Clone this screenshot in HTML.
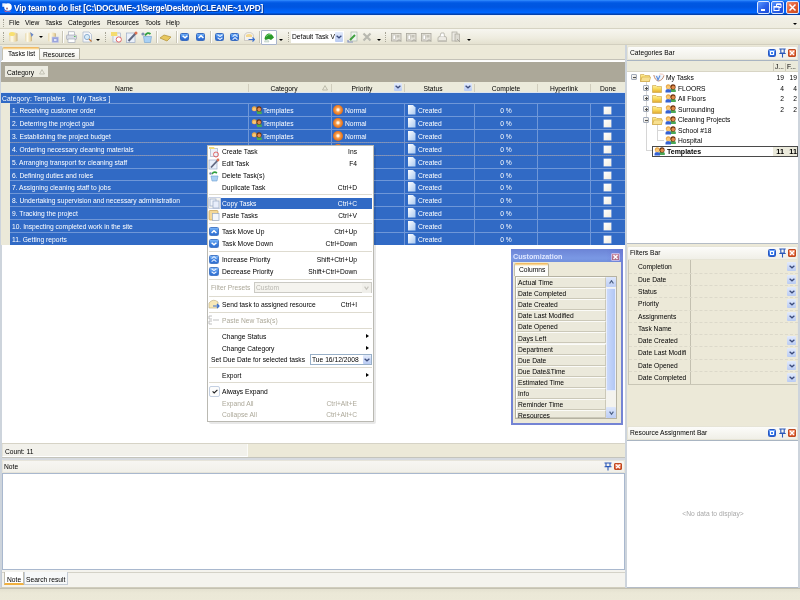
<!DOCTYPE html>
<html><head><meta charset="utf-8">
<style>
*{margin:0;padding:0;box-sizing:border-box}
html,body{width:800px;height:600px;overflow:hidden;background:#ece9d8;font-family:"Liberation Sans",sans-serif;font-size:6.7px;color:#000;position:relative}
.a{position:absolute}
.t{position:absolute;white-space:nowrap;line-height:8px;will-change:transform}
</style></head><body>

<div class="a" style="left:0px;top:0px;width:800px;height:15px;background:linear-gradient(#3a96ff 0,#1a70f4 1px,#0058e2 3px,#0055e0 7px,#0062f6 11px,#0066ff 12.5px,#0048c0 14px,#0a3a98 15px)"></div>
<svg class="a" style="left:2px;top:3px" width="10" height="9"><rect x="0.3" y="0.3" width="3.5" height="3.5" fill="#e8f0ff"/><circle cx="6" cy="4" r="3.8" fill="#fff"/><path d="M2 6.5 Q5 10 9.5 7.5 L8 9 H3 Z" fill="#d06080"/><circle cx="5" cy="5.5" r="1" fill="#a07080"/></svg>
<div class="t" style="left:14px;top:4px;color:#fff;font-weight:bold;font-size:8.3px;letter-spacing:-0.22px;line-height:10px;top:3px;text-shadow:1px 1px 0 #0a3a9a">Vip team to do list [C:\DOCUME~1\Serge\Desktop\CLEANE~1.VPD]</div>
<div class="a" style="left:757px;top:1px;width:13px;height:13px;border:1px solid #dce8ff;border-radius:2px;background:linear-gradient(135deg,#5a98ff,#2a5ee8 55%,#1c4cd8)"></div>
<div class="a" style="left:761px;top:9px;width:4px;height:2px;background:#fff"></div>
<div class="a" style="left:771px;top:1px;width:13px;height:13px;border:1px solid #dce8ff;border-radius:2px;background:linear-gradient(135deg,#5a98ff,#2a5ee8 55%,#1c4cd8)"></div>
<svg class="a" style="left:773px;top:3px" width="9" height="9"><path d="M3.5 3 V1 H8 V4.5 H6" stroke="#fff" stroke-width="1" fill="none"/><rect x="1" y="3.5" width="5" height="4" stroke="#fff" stroke-width="1" fill="none"/><path d="M1 4 H6" stroke="#fff" stroke-width="1.3"/><path d="M3.5 1.3 H8" stroke="#fff" stroke-width="1.3"/></svg>
<div class="a" style="left:786px;top:1px;width:13px;height:13px;border:1px solid #dce8ff;border-radius:2px;background:linear-gradient(135deg,#f09070,#e05a30 55%,#c84a20)"></div>
<svg class="a" style="left:788px;top:3px" width="9" height="9"><path d="M1.5 1.5 L7.5 7.5 M7.5 1.5 L1.5 7.5" stroke="#fff" stroke-width="1.5"/></svg>
<div class="a" style="left:0px;top:15px;width:800px;height:14px;background:linear-gradient(#e8eefc 0,#f4f3ee 1.5px,#f1efe6 3px,#eeecdf 100%);border-bottom:1px solid #d6d3c3"></div>
<div class="a" style="left:3px;top:19px;width:1px;height:8px;border-left:1px dotted #a8a698"></div>
<div class="t" style="left:9px;top:19px;">File</div>
<div class="t" style="left:25px;top:19px;">View</div>
<div class="t" style="left:45px;top:19px;">Tasks</div>
<div class="t" style="left:68px;top:19px;">Categories</div>
<div class="t" style="left:107px;top:19px;">Resources</div>
<div class="t" style="left:145px;top:19px;">Tools</div>
<div class="t" style="left:166px;top:19px;">Help</div>
<div class="a" style="left:793px;top:23px;border-left:2px solid transparent;border-right:2px solid transparent;border-top:2px solid #000"></div>
<div class="a" style="left:0px;top:29px;width:800px;height:16px;background:linear-gradient(#f7f6f0,#eeecdf 60%,#e4e1d0);border-bottom:1px solid #d2cfbf"></div>
<div class="a" style="left:3px;top:32px;width:1px;height:10px;border-left:1px dotted #a8a698"></div>
<svg width="0" height="0" style="position:absolute"><defs><linearGradient id="cyl" x1="0" y1="0" x2="1" y2="0"><stop offset="0" stop-color="#e6d8b0"/><stop offset="0.35" stop-color="#fffbea"/><stop offset="0.8" stop-color="#e8d4a0"/><stop offset="1" stop-color="#c8b080"/></linearGradient></defs></svg>
<svg class="a" style="left:8px;top:31px" width="11" height="12"><path d="M1 2.5 Q5 0 9.5 2.5 V10 Q5 12 1 10 Z" fill="url(#cyl)"/><ellipse cx="4" cy="3" rx="3" ry="2" fill="#f8e070"/></svg>
<svg class="a" style="left:24px;top:31px" width="11" height="12"><path d="M1 2.5 Q4.5 0.5 8 2.5 V10 Q4.5 12 1 10 Z" fill="url(#cyl)"/><path d="M6 1 L9.5 3.5 L7.5 6 Z" fill="#6a88c8"/></svg>
<div class="a" style="left:39px;top:36px;border-left:2px solid transparent;border-right:2px solid transparent;border-top:2px solid #000"></div>
<svg class="a" style="left:47px;top:31px" width="12" height="12"><path d="M1 2.5 Q5 0.5 9 2.5 V10 Q5 12 1 10 Z" fill="url(#cyl)"/><rect x="5" y="6" width="6.5" height="5.5" fill="#9aa4dc" stroke="#c8cce8" stroke-width="0.6"/><rect x="7" y="8" width="2.5" height="2" fill="#e0e4f8"/></svg>
<div class="a" style="left:62px;top:31px;width:1px;height:12px;background:#c9c6b6;border-right:1px solid #fff;width:2px"></div>
<svg class="a" style="left:66px;top:31px" width="11" height="12"><rect x="2.5" y="0.8" width="6" height="3.5" fill="#fff" stroke="#9aa0b0" stroke-width="0.6"/><rect x="0.5" y="4" width="10" height="4.5" rx="1" fill="#d8dce4" stroke="#9aa0b0" stroke-width="0.6"/><rect x="2" y="8" width="7" height="3.5" fill="#fff" stroke="#9aa0b0" stroke-width="0.6"/><rect x="8" y="5" width="1.5" height="1" fill="#50c050"/></svg>
<svg class="a" style="left:82px;top:31px" width="11" height="12"><path d="M1 1 H7 L9.5 3.5 V11 H1 Z" fill="#f4f6fb" stroke="#a8b4c8" stroke-width="0.7"/><circle cx="5" cy="6" r="2.6" fill="#d8ecf8" stroke="#7aa0c8" stroke-width="0.8"/><path d="M7 8 L9.5 10.5" stroke="#c87830" stroke-width="1.2"/></svg>
<div class="a" style="left:96px;top:39px;border-left:2px solid transparent;border-right:2px solid transparent;border-top:2px solid #000"></div>
<div class="a" style="left:105px;top:32px;width:1px;height:10px;border-left:1px dotted #a8a698"></div>
<svg class="a" style="left:110px;top:31px" width="13" height="12"><rect x="3" y="2" width="7.5" height="9" fill="#eef2f8" stroke="#9aa8c0" stroke-width="0.6"/><path d="M1 1 H7 L7.5 5 H1 Z" fill="#f4dc70"/><circle cx="8.8" cy="8.5" r="2.6" fill="#fff" stroke="#e05a5a" stroke-width="0.9"/></svg>
<svg class="a" style="left:126px;top:31px" width="12" height="12"><rect x="0.5" y="2" width="8.5" height="9.5" fill="#eaf0fa" stroke="#8ea0c0" stroke-width="0.6"/><path d="M2.5 10 L9.5 2.5" stroke="#606880" stroke-width="2"/><circle cx="10" cy="2" r="1.5" fill="#e07050"/></svg>
<svg class="a" style="left:140px;top:31px" width="13" height="12"><path d="M3.5 5.5 H11.5 L10.5 11.5 H4.5 Z" fill="#a8d0f4" stroke="#70a0d0" stroke-width="0.6"/><path d="M5 4.5 Q7.5 0.5 10.5 3" stroke="#30a040" stroke-width="1.8" fill="none"/><circle cx="3" cy="3" r="1.6" fill="#8090b0"/></svg>
<div class="a" style="left:156px;top:31px;width:1px;height:12px;background:#c9c6b6;border-right:1px solid #fff;width:2px"></div>
<svg class="a" style="left:159px;top:34px" width="13" height="8"><path d="M1 4 L5 1 L12 3 L8 7 Z" fill="#e8c860" stroke="#b89840" stroke-width="0.8"/></svg>
<div class="a" style="left:176px;top:31px;width:1px;height:12px;background:#c9c6b6;border-right:1px solid #fff;width:2px"></div>
<div class="a" style="left:180px;top:33px;width:9px;height:8px;border-radius:1.5px;background:linear-gradient(#70b0f8,#3478dc 60%,#2c68cc);border:1px solid #3a6cc0"></div>
<svg class="a" style="left:181.5px;top:35px" width="6" height="4.0"><path d="M0.6 0.7 L3.0 2.8 L5.4 0.7" fill="none" stroke="#fff" stroke-width="1.5"/></svg>
<div class="a" style="left:196px;top:33px;width:9px;height:8px;border-radius:1.5px;background:linear-gradient(#70b0f8,#3478dc 60%,#2c68cc);border:1px solid #3a6cc0"></div>
<svg class="a" style="left:197.5px;top:35px" width="6" height="4.0"><path d="M0.6 3.0 L3.0 0.7 L5.4 3.0" fill="none" stroke="#fff" stroke-width="1.5"/></svg>
<div class="a" style="left:210px;top:31px;width:1px;height:12px;background:#c9c6b6;border-right:1px solid #fff;width:2px"></div>
<div class="a" style="left:215px;top:33px;width:9px;height:8px;border-radius:1.5px;background:linear-gradient(#70b0f8,#3478dc 60%,#2c68cc);border:1px solid #3a6cc0"></div>
<svg class="a" style="left:216.5px;top:33.5px" width="6" height="3.7"><path d="M0.6 0.7 L3.0 2.5 L5.4 0.7" fill="none" stroke="#e8f0ff" stroke-width="1.1"/></svg>
<svg class="a" style="left:216.5px;top:36.5px" width="6" height="3.7"><path d="M0.6 0.7 L3.0 2.5 L5.4 0.7" fill="none" stroke="#e8f0ff" stroke-width="1.1"/></svg>
<div class="a" style="left:230px;top:33px;width:9px;height:8px;border-radius:1.5px;background:linear-gradient(#70b0f8,#3478dc 60%,#2c68cc);border:1px solid #3a6cc0"></div>
<svg class="a" style="left:231.5px;top:33.5px" width="6" height="3.7"><path d="M0.6 2.7 L3.0 0.7 L5.4 2.7" fill="none" stroke="#e8f0ff" stroke-width="1.1"/></svg>
<svg class="a" style="left:231.5px;top:36.5px" width="6" height="3.7"><path d="M0.6 2.7 L3.0 0.7 L5.4 2.7" fill="none" stroke="#e8f0ff" stroke-width="1.1"/></svg>
<svg class="a" style="left:244px;top:32px" width="11" height="10"><path d="M0.5 4.5 Q0.5 0.5 5 0.5 Q9.5 0.5 9.5 4.5 V8.5 H0.5 Z" fill="#f4f2ee" stroke="#b8b4ac" stroke-width="0.6"/><path d="M2 3 Q5 0.8 8 3 V5 H2 Z" fill="#f4d890"/><path d="M4.5 7.5 H10.5 M8.5 5.5 L10.5 7.5 L8.5 9.5" stroke="#3a70d0" stroke-width="1.2" fill="none"/></svg>
<div class="a" style="left:259px;top:31px;width:1px;height:12px;background:#c9c6b6;border-right:1px solid #fff;width:2px"></div>
<div class="a" style="left:261px;top:30px;width:16px;height:15px;background:#fff;border:1px solid #a8b4cc;border-radius:1px"></div>
<svg class="a" style="left:263px;top:32px" width="12" height="11"><path d="M1.5 10 L3.5 5 L6 10 Z" fill="#dce8e0" stroke="#a8c0b0" stroke-width="0.5"/><path d="M1.5 7 Q2 2.5 5.5 1.5 Q8.5 1 11 5.5 L8 8 Q5 6 3 8 Z" fill="#2a9a2a"/><path d="M3 4.5 Q5 2 8 2.5" stroke="#70d070" stroke-width="1" fill="none"/></svg>
<div class="a" style="left:279px;top:39px;border-left:2px solid transparent;border-right:2px solid transparent;border-top:2px solid #000"></div>
<div class="a" style="left:288px;top:32px;width:1px;height:10px;border-left:1px dotted #a8a698"></div>
<div class="a" style="left:291px;top:31px;width:53px;height:12px;background:#fff"></div>
<div class="t" style="left:292px;top:33px;">Default Task V</div>
<div class="a" style="left:335px;top:32px;width:8px;height:10px;background:linear-gradient(#e3ebfc,#b9cbf3);border-radius:1px"></div>
<svg class="a" style="left:336.0px;top:35.25px" width="6" height="4.0"><path d="M0.6 0.7 L3.0 2.8 L5.4 0.7" fill="none" stroke="#3c4c7c" stroke-width="1.3"/></svg>
<svg class="a" style="left:347px;top:31px" width="11" height="12"><path d="M1 9 L1 11 L6 11" stroke="#8090c0" stroke-width="1.2" fill="none"/><rect x="4" y="1" width="6" height="9" fill="#eef4ee" stroke="#a0b0a0" stroke-width="0.6"/><path d="M3 9 L8 4" stroke="#40a040" stroke-width="2"/></svg>
<svg class="a" style="left:362px;top:32px" width="10" height="10"><path d="M1.5 1.5 L8.5 8.5 M8.5 1.5 L1.5 8.5" stroke="#b8b8b0" stroke-width="2.2"/></svg>
<div class="a" style="left:377px;top:39px;border-left:2px solid transparent;border-right:2px solid transparent;border-top:2px solid #000"></div>
<div class="a" style="left:385px;top:32px;width:1px;height:10px;border-left:1px dotted #a8a698"></div>
<svg class="a" style="left:391px;top:32px" width="11" height="11"><rect x="0.5" y="1.5" width="9.5" height="7.5" fill="#e4e2da" stroke="#a8a69c" stroke-width="0.8"/><rect x="2" y="3" width="2.5" height="4.5" fill="#fff" stroke="#b4b2a8" stroke-width="0.6"/><rect x="5.5" y="3" width="3" height="2.5" fill="#c4c2b8"/><path d="M6 9.5 L8 7.5 L10 9.5" stroke="#9c9a90" stroke-width="0.8" fill="none"/></svg>
<svg class="a" style="left:406px;top:32px" width="11" height="11"><rect x="0.5" y="1.5" width="9.5" height="7.5" fill="#e4e2da" stroke="#a8a69c" stroke-width="0.8"/><rect x="2" y="3" width="2.5" height="4.5" fill="#fff" stroke="#b4b2a8" stroke-width="0.6"/><rect x="5.5" y="3" width="3" height="2.5" fill="#c4c2b8"/><path d="M6 9.5 L8 7.5 L10 9.5" stroke="#9c9a90" stroke-width="0.8" fill="none"/></svg>
<svg class="a" style="left:421px;top:32px" width="11" height="11"><rect x="0.5" y="1.5" width="9.5" height="7.5" fill="#e4e2da" stroke="#a8a69c" stroke-width="0.8"/><rect x="2" y="3" width="2.5" height="4.5" fill="#fff" stroke="#b4b2a8" stroke-width="0.6"/><rect x="5.5" y="3" width="3" height="2.5" fill="#c4c2b8"/><path d="M6 9.5 L8 7.5 L10 9.5" stroke="#9c9a90" stroke-width="0.8" fill="none"/></svg>
<svg class="a" style="left:437px;top:32px" width="10" height="11"><path d="M1 9.5 V6 Q1 4.5 3 4.5 H8 Q9.5 4.5 9.5 6 V9.5 Z" fill="#eceae4" stroke="#a8a69c" stroke-width="0.7"/><path d="M3 4.5 L4 1 H7 L7.5 4.5" fill="#fff" stroke="#a8a69c" stroke-width="0.7"/><rect x="1" y="8" width="8.5" height="1.5" fill="#c8c6bc"/></svg>
<svg class="a" style="left:451px;top:31px" width="11" height="12"><rect x="1" y="1" width="5" height="9" fill="#eceae4" stroke="#a8a69c" stroke-width="0.7"/><rect x="4" y="3" width="4.5" height="7" fill="#dcdad2" stroke="#a8a69c" stroke-width="0.7"/><path d="M6 8 L9 11" stroke="#a8a69c" stroke-width="1"/></svg>
<div class="a" style="left:467px;top:39px;border-left:2px solid transparent;border-right:2px solid transparent;border-top:2px solid #000"></div>
<div class="a" style="left:0px;top:45px;width:627px;height:16px;background:#ece9d8"></div>
<div class="a" style="left:2px;top:47px;width:38px;height:14px;background:linear-gradient(#eeb058 0,#f4c470 1px,#fbe4b0 2px,#fdfdfb 3px);border-left:1px solid #c4c1b1;border-right:1px solid #b0ad9d;border-radius:2px 2px 0 0"></div>
<div class="t" style="left:8px;top:50px;">Tasks list</div>
<div class="a" style="left:39px;top:48px;width:41px;height:12px;background:linear-gradient(#fefefe,#efeee6);border:1px solid #b8b5a5;border-bottom:none"></div>
<div class="t" style="left:43px;top:51px;">Resources</div>
<div class="a" style="left:0px;top:60px;width:627px;height:385px;background:#fff;border-bottom:1px solid #c3cbd6"></div>
<div class="a" style="left:0px;top:46px;width:2px;height:542px;background:#cdd4dc"></div>
<div class="a" style="left:40px;top:59px;width:585px;height:1px;background:#c4c2b8"></div>
<div class="a" style="left:2px;top:60px;width:623px;height:1px;background:#fdfdfb"></div>
<div class="a" style="left:1px;top:62px;width:624px;height:20px;background:#aca899"></div>
<div class="a" style="left:1px;top:61px;width:624px;height:1px;background:#fff"></div>
<div class="a" style="left:5px;top:66px;width:43px;height:11px;background:#ecebe1"></div>
<div class="t" style="left:7px;top:69px;">Category</div>
<svg class="a" style="left:39px;top:69px" width="6" height="6"><path d="M0.5 5 L3 0.6 L5.5 5 Z" fill="none" stroke="#b8b6a8" stroke-width="0.8"/></svg>
<div class="a" style="left:1px;top:82px;width:624px;height:11px;background:#ebeadb;border-bottom:1px solid #dde4ee"></div>
<div class="a" style="left:248px;top:84px;width:1px;height:8px;background:#d0cdbd"></div>
<div class="a" style="left:331px;top:84px;width:1px;height:8px;background:#d0cdbd"></div>
<div class="a" style="left:404px;top:84px;width:1px;height:8px;background:#d0cdbd"></div>
<div class="a" style="left:474px;top:84px;width:1px;height:8px;background:#d0cdbd"></div>
<div class="a" style="left:537px;top:84px;width:1px;height:8px;background:#d0cdbd"></div>
<div class="a" style="left:590px;top:84px;width:1px;height:8px;background:#d0cdbd"></div>
<div class="t" style="left:49px;width:150px;text-align:center;top:85px;">Name</div>
<div class="t" style="left:209px;width:150px;text-align:center;top:85px;">Category</div>
<div class="t" style="left:287px;width:150px;text-align:center;top:85px;">Priority</div>
<div class="t" style="left:358px;width:150px;text-align:center;top:85px;">Status</div>
<div class="t" style="left:430.5px;width:150px;text-align:center;top:85px;">Complete</div>
<div class="t" style="left:489px;width:150px;text-align:center;top:85px;">Hyperlink</div>
<div class="t" style="left:533px;width:150px;text-align:center;top:85px;">Done</div>
<svg class="a" style="left:322px;top:85px" width="6" height="6"><path d="M0.5 5 L3 0.6 L5.5 5 Z" fill="none" stroke="#b0ae9e" stroke-width="0.8"/></svg>
<div class="a" style="left:394px;top:83px;width:8px;height:8px;background:linear-gradient(#e3ebfc,#b9cbf3);border-radius:1px"></div>
<svg class="a" style="left:395.0px;top:85.25px" width="6" height="4.0"><path d="M0.6 0.7 L3.0 2.8 L5.4 0.7" fill="none" stroke="#3c4c7c" stroke-width="1.3"/></svg>
<div class="a" style="left:464px;top:83px;width:8px;height:8px;background:linear-gradient(#e3ebfc,#b9cbf3);border-radius:1px"></div>
<svg class="a" style="left:465.0px;top:85.25px" width="6" height="4.0"><path d="M0.6 0.7 L3.0 2.8 L5.4 0.7" fill="none" stroke="#3c4c7c" stroke-width="1.3"/></svg>
<div class="a" style="left:1px;top:93px;width:624px;height:10px;background:#316ac5"></div>
<div class="t" style="left:2px;top:95px;color:#fff;letter-spacing:0.1px">Category: Templates</div>
<div class="t" style="left:72.5px;top:95px;color:#fff;letter-spacing:0.2px">[ My Tasks ]</div>
<div class="a" style="left:1px;top:103px;width:9px;height:142px;background:#ebe9d9"></div>
<div class="a" style="left:10px;top:103px;width:615px;height:142px;background:#316ac5"></div>
<div class="a" style="left:10px;top:103px;width:615px;height:1px;background:#6f97d8"></div>
<div class="t" style="left:12px;top:107px;color:#fff">1. Receiving customer order</div>
<div class="a" style="left:248px;top:103px;width:1px;height:13px;background:#6f97d8"></div>
<div class="a" style="left:331px;top:103px;width:1px;height:13px;background:#6f97d8"></div>
<div class="a" style="left:404px;top:103px;width:1px;height:13px;background:#6f97d8"></div>
<div class="a" style="left:474px;top:103px;width:1px;height:13px;background:#6f97d8"></div>
<div class="a" style="left:537px;top:103px;width:1px;height:13px;background:#6f97d8"></div>
<div class="a" style="left:590px;top:103px;width:1px;height:13px;background:#6f97d8"></div>
<svg class="a" style="left:251px;top:106px" width="11" height="9"><path d="M5 6 Q5 4.8 7.8 4.8 Q10.8 4.8 10.8 6.5 V8 H5 Z" fill="#48a858"/><path d="M0.5 6.8 Q0.5 5 3.2 5 Q6 5 6 6.8 V8.5 H0.5 Z" fill="#3562d4"/><circle cx="3.3" cy="2.8" r="2.5" fill="#e8a848"/><circle cx="3.4" cy="3.2" r="1.7" fill="#f8c878"/><circle cx="8" cy="2.9" r="2.6" fill="#6a3010"/><circle cx="8.2" cy="3.4" r="1.8" fill="#e08a48"/></svg>
<div class="t" style="left:263px;top:107px;color:#fff">Templates</div>
<div class="a" style="left:333px;top:105px;width:10px;height:10px;border-radius:5px;background:radial-gradient(circle at 50% 48%,#fff 0,#fff0d8 14%,#f8a050 32%,#e87820 60%,#c05810 100%)"></div>
<div class="t" style="left:345px;top:107px;color:#fff">Normal</div>
<svg class="a" style="left:408px;top:105px" width="8" height="10"><path d="M0 0 H5 L7.5 2.5 V9.5 H0 Z" fill="url(#dg)"/></svg>
<div class="t" style="left:418px;top:107px;color:#fff">Created</div>
<div class="t" style="left:430.5px;width:150px;text-align:center;top:107px;color:#fff">0 %</div>
<div class="a" style="left:604px;top:107px;width:7px;height:7px;background:linear-gradient(135deg,#fff,#f0ece0);box-shadow:0 0 0 0.5px #c8d4ec"></div>
<div class="a" style="left:10px;top:116px;width:615px;height:1px;background:#6f97d8"></div>
<div class="t" style="left:12px;top:120px;color:#fff">2. Deterring the project goal</div>
<div class="a" style="left:248px;top:116px;width:1px;height:13px;background:#6f97d8"></div>
<div class="a" style="left:331px;top:116px;width:1px;height:13px;background:#6f97d8"></div>
<div class="a" style="left:404px;top:116px;width:1px;height:13px;background:#6f97d8"></div>
<div class="a" style="left:474px;top:116px;width:1px;height:13px;background:#6f97d8"></div>
<div class="a" style="left:537px;top:116px;width:1px;height:13px;background:#6f97d8"></div>
<div class="a" style="left:590px;top:116px;width:1px;height:13px;background:#6f97d8"></div>
<svg class="a" style="left:251px;top:119px" width="11" height="9"><path d="M5 6 Q5 4.8 7.8 4.8 Q10.8 4.8 10.8 6.5 V8 H5 Z" fill="#48a858"/><path d="M0.5 6.8 Q0.5 5 3.2 5 Q6 5 6 6.8 V8.5 H0.5 Z" fill="#3562d4"/><circle cx="3.3" cy="2.8" r="2.5" fill="#e8a848"/><circle cx="3.4" cy="3.2" r="1.7" fill="#f8c878"/><circle cx="8" cy="2.9" r="2.6" fill="#6a3010"/><circle cx="8.2" cy="3.4" r="1.8" fill="#e08a48"/></svg>
<div class="t" style="left:263px;top:120px;color:#fff">Templates</div>
<div class="a" style="left:333px;top:118px;width:10px;height:10px;border-radius:5px;background:radial-gradient(circle at 50% 48%,#fff 0,#fff0d8 14%,#f8a050 32%,#e87820 60%,#c05810 100%)"></div>
<div class="t" style="left:345px;top:120px;color:#fff">Normal</div>
<svg class="a" style="left:408px;top:118px" width="8" height="10"><path d="M0 0 H5 L7.5 2.5 V9.5 H0 Z" fill="url(#dg)"/></svg>
<div class="t" style="left:418px;top:120px;color:#fff">Created</div>
<div class="t" style="left:430.5px;width:150px;text-align:center;top:120px;color:#fff">0 %</div>
<div class="a" style="left:604px;top:120px;width:7px;height:7px;background:linear-gradient(135deg,#fff,#f0ece0);box-shadow:0 0 0 0.5px #c8d4ec"></div>
<div class="a" style="left:10px;top:129px;width:615px;height:1px;background:#6f97d8"></div>
<div class="t" style="left:12px;top:133px;color:#fff">3. Establishing the project budget</div>
<div class="a" style="left:248px;top:129px;width:1px;height:13px;background:#6f97d8"></div>
<div class="a" style="left:331px;top:129px;width:1px;height:13px;background:#6f97d8"></div>
<div class="a" style="left:404px;top:129px;width:1px;height:13px;background:#6f97d8"></div>
<div class="a" style="left:474px;top:129px;width:1px;height:13px;background:#6f97d8"></div>
<div class="a" style="left:537px;top:129px;width:1px;height:13px;background:#6f97d8"></div>
<div class="a" style="left:590px;top:129px;width:1px;height:13px;background:#6f97d8"></div>
<svg class="a" style="left:251px;top:132px" width="11" height="9"><path d="M5 6 Q5 4.8 7.8 4.8 Q10.8 4.8 10.8 6.5 V8 H5 Z" fill="#48a858"/><path d="M0.5 6.8 Q0.5 5 3.2 5 Q6 5 6 6.8 V8.5 H0.5 Z" fill="#3562d4"/><circle cx="3.3" cy="2.8" r="2.5" fill="#e8a848"/><circle cx="3.4" cy="3.2" r="1.7" fill="#f8c878"/><circle cx="8" cy="2.9" r="2.6" fill="#6a3010"/><circle cx="8.2" cy="3.4" r="1.8" fill="#e08a48"/></svg>
<div class="t" style="left:263px;top:133px;color:#fff">Templates</div>
<div class="a" style="left:333px;top:131px;width:10px;height:10px;border-radius:5px;background:radial-gradient(circle at 50% 48%,#fff 0,#fff0d8 14%,#f8a050 32%,#e87820 60%,#c05810 100%)"></div>
<div class="t" style="left:345px;top:133px;color:#fff">Normal</div>
<svg class="a" style="left:408px;top:131px" width="8" height="10"><path d="M0 0 H5 L7.5 2.5 V9.5 H0 Z" fill="url(#dg)"/></svg>
<div class="t" style="left:418px;top:133px;color:#fff">Created</div>
<div class="t" style="left:430.5px;width:150px;text-align:center;top:133px;color:#fff">0 %</div>
<div class="a" style="left:604px;top:133px;width:7px;height:7px;background:linear-gradient(135deg,#fff,#f0ece0);box-shadow:0 0 0 0.5px #c8d4ec"></div>
<div class="a" style="left:10px;top:142px;width:615px;height:1px;background:#6f97d8"></div>
<div class="t" style="left:12px;top:146px;color:#fff">4. Ordering necessary cleaning materials</div>
<div class="a" style="left:248px;top:142px;width:1px;height:13px;background:#6f97d8"></div>
<div class="a" style="left:331px;top:142px;width:1px;height:13px;background:#6f97d8"></div>
<div class="a" style="left:404px;top:142px;width:1px;height:13px;background:#6f97d8"></div>
<div class="a" style="left:474px;top:142px;width:1px;height:13px;background:#6f97d8"></div>
<div class="a" style="left:537px;top:142px;width:1px;height:13px;background:#6f97d8"></div>
<div class="a" style="left:590px;top:142px;width:1px;height:13px;background:#6f97d8"></div>
<svg class="a" style="left:251px;top:145px" width="11" height="9"><path d="M5 6 Q5 4.8 7.8 4.8 Q10.8 4.8 10.8 6.5 V8 H5 Z" fill="#48a858"/><path d="M0.5 6.8 Q0.5 5 3.2 5 Q6 5 6 6.8 V8.5 H0.5 Z" fill="#3562d4"/><circle cx="3.3" cy="2.8" r="2.5" fill="#e8a848"/><circle cx="3.4" cy="3.2" r="1.7" fill="#f8c878"/><circle cx="8" cy="2.9" r="2.6" fill="#6a3010"/><circle cx="8.2" cy="3.4" r="1.8" fill="#e08a48"/></svg>
<div class="t" style="left:263px;top:146px;color:#fff">Templates</div>
<div class="a" style="left:333px;top:144px;width:10px;height:10px;border-radius:5px;background:radial-gradient(circle at 50% 48%,#fff 0,#fff0d8 14%,#f8a050 32%,#e87820 60%,#c05810 100%)"></div>
<div class="t" style="left:345px;top:146px;color:#fff">Normal</div>
<svg class="a" style="left:408px;top:144px" width="8" height="10"><path d="M0 0 H5 L7.5 2.5 V9.5 H0 Z" fill="url(#dg)"/></svg>
<div class="t" style="left:418px;top:146px;color:#fff">Created</div>
<div class="t" style="left:430.5px;width:150px;text-align:center;top:146px;color:#fff">0 %</div>
<div class="a" style="left:604px;top:146px;width:7px;height:7px;background:linear-gradient(135deg,#fff,#f0ece0);box-shadow:0 0 0 0.5px #c8d4ec"></div>
<div class="a" style="left:10px;top:155px;width:615px;height:1px;background:#6f97d8"></div>
<div class="t" style="left:12px;top:159px;color:#fff">5. Arranging transport for cleaning staff</div>
<div class="a" style="left:248px;top:155px;width:1px;height:13px;background:#6f97d8"></div>
<div class="a" style="left:331px;top:155px;width:1px;height:13px;background:#6f97d8"></div>
<div class="a" style="left:404px;top:155px;width:1px;height:13px;background:#6f97d8"></div>
<div class="a" style="left:474px;top:155px;width:1px;height:13px;background:#6f97d8"></div>
<div class="a" style="left:537px;top:155px;width:1px;height:13px;background:#6f97d8"></div>
<div class="a" style="left:590px;top:155px;width:1px;height:13px;background:#6f97d8"></div>
<svg class="a" style="left:251px;top:158px" width="11" height="9"><path d="M5 6 Q5 4.8 7.8 4.8 Q10.8 4.8 10.8 6.5 V8 H5 Z" fill="#48a858"/><path d="M0.5 6.8 Q0.5 5 3.2 5 Q6 5 6 6.8 V8.5 H0.5 Z" fill="#3562d4"/><circle cx="3.3" cy="2.8" r="2.5" fill="#e8a848"/><circle cx="3.4" cy="3.2" r="1.7" fill="#f8c878"/><circle cx="8" cy="2.9" r="2.6" fill="#6a3010"/><circle cx="8.2" cy="3.4" r="1.8" fill="#e08a48"/></svg>
<div class="t" style="left:263px;top:159px;color:#fff">Templates</div>
<div class="a" style="left:333px;top:157px;width:10px;height:10px;border-radius:5px;background:radial-gradient(circle at 50% 48%,#fff 0,#fff0d8 14%,#f8a050 32%,#e87820 60%,#c05810 100%)"></div>
<div class="t" style="left:345px;top:159px;color:#fff">Normal</div>
<svg class="a" style="left:408px;top:157px" width="8" height="10"><path d="M0 0 H5 L7.5 2.5 V9.5 H0 Z" fill="url(#dg)"/></svg>
<div class="t" style="left:418px;top:159px;color:#fff">Created</div>
<div class="t" style="left:430.5px;width:150px;text-align:center;top:159px;color:#fff">0 %</div>
<div class="a" style="left:604px;top:159px;width:7px;height:7px;background:linear-gradient(135deg,#fff,#f0ece0);box-shadow:0 0 0 0.5px #c8d4ec"></div>
<div class="a" style="left:10px;top:168px;width:615px;height:1px;background:#6f97d8"></div>
<div class="t" style="left:12px;top:172px;color:#fff">6. Defining duties and roles</div>
<div class="a" style="left:248px;top:168px;width:1px;height:13px;background:#6f97d8"></div>
<div class="a" style="left:331px;top:168px;width:1px;height:13px;background:#6f97d8"></div>
<div class="a" style="left:404px;top:168px;width:1px;height:13px;background:#6f97d8"></div>
<div class="a" style="left:474px;top:168px;width:1px;height:13px;background:#6f97d8"></div>
<div class="a" style="left:537px;top:168px;width:1px;height:13px;background:#6f97d8"></div>
<div class="a" style="left:590px;top:168px;width:1px;height:13px;background:#6f97d8"></div>
<svg class="a" style="left:251px;top:171px" width="11" height="9"><path d="M5 6 Q5 4.8 7.8 4.8 Q10.8 4.8 10.8 6.5 V8 H5 Z" fill="#48a858"/><path d="M0.5 6.8 Q0.5 5 3.2 5 Q6 5 6 6.8 V8.5 H0.5 Z" fill="#3562d4"/><circle cx="3.3" cy="2.8" r="2.5" fill="#e8a848"/><circle cx="3.4" cy="3.2" r="1.7" fill="#f8c878"/><circle cx="8" cy="2.9" r="2.6" fill="#6a3010"/><circle cx="8.2" cy="3.4" r="1.8" fill="#e08a48"/></svg>
<div class="t" style="left:263px;top:172px;color:#fff">Templates</div>
<div class="a" style="left:333px;top:170px;width:10px;height:10px;border-radius:5px;background:radial-gradient(circle at 50% 48%,#fff 0,#fff0d8 14%,#f8a050 32%,#e87820 60%,#c05810 100%)"></div>
<div class="t" style="left:345px;top:172px;color:#fff">Normal</div>
<svg class="a" style="left:408px;top:170px" width="8" height="10"><path d="M0 0 H5 L7.5 2.5 V9.5 H0 Z" fill="url(#dg)"/></svg>
<div class="t" style="left:418px;top:172px;color:#fff">Created</div>
<div class="t" style="left:430.5px;width:150px;text-align:center;top:172px;color:#fff">0 %</div>
<div class="a" style="left:604px;top:172px;width:7px;height:7px;background:linear-gradient(135deg,#fff,#f0ece0);box-shadow:0 0 0 0.5px #c8d4ec"></div>
<div class="a" style="left:10px;top:180px;width:615px;height:1px;background:#6f97d8"></div>
<div class="t" style="left:12px;top:184px;color:#fff">7. Assigning cleaning staff to jobs</div>
<div class="a" style="left:248px;top:180px;width:1px;height:13px;background:#6f97d8"></div>
<div class="a" style="left:331px;top:180px;width:1px;height:13px;background:#6f97d8"></div>
<div class="a" style="left:404px;top:180px;width:1px;height:13px;background:#6f97d8"></div>
<div class="a" style="left:474px;top:180px;width:1px;height:13px;background:#6f97d8"></div>
<div class="a" style="left:537px;top:180px;width:1px;height:13px;background:#6f97d8"></div>
<div class="a" style="left:590px;top:180px;width:1px;height:13px;background:#6f97d8"></div>
<svg class="a" style="left:251px;top:183px" width="11" height="9"><path d="M5 6 Q5 4.8 7.8 4.8 Q10.8 4.8 10.8 6.5 V8 H5 Z" fill="#48a858"/><path d="M0.5 6.8 Q0.5 5 3.2 5 Q6 5 6 6.8 V8.5 H0.5 Z" fill="#3562d4"/><circle cx="3.3" cy="2.8" r="2.5" fill="#e8a848"/><circle cx="3.4" cy="3.2" r="1.7" fill="#f8c878"/><circle cx="8" cy="2.9" r="2.6" fill="#6a3010"/><circle cx="8.2" cy="3.4" r="1.8" fill="#e08a48"/></svg>
<div class="t" style="left:263px;top:184px;color:#fff">Templates</div>
<div class="a" style="left:333px;top:182px;width:10px;height:10px;border-radius:5px;background:radial-gradient(circle at 50% 48%,#fff 0,#fff0d8 14%,#f8a050 32%,#e87820 60%,#c05810 100%)"></div>
<div class="t" style="left:345px;top:184px;color:#fff">Normal</div>
<svg class="a" style="left:408px;top:182px" width="8" height="10"><path d="M0 0 H5 L7.5 2.5 V9.5 H0 Z" fill="url(#dg)"/></svg>
<div class="t" style="left:418px;top:184px;color:#fff">Created</div>
<div class="t" style="left:430.5px;width:150px;text-align:center;top:184px;color:#fff">0 %</div>
<div class="a" style="left:604px;top:184px;width:7px;height:7px;background:linear-gradient(135deg,#fff,#f0ece0);box-shadow:0 0 0 0.5px #c8d4ec"></div>
<div class="a" style="left:10px;top:193px;width:615px;height:1px;background:#6f97d8"></div>
<div class="t" style="left:12px;top:197px;color:#fff">8. Undertaking supervision and necessary administration</div>
<div class="a" style="left:248px;top:193px;width:1px;height:13px;background:#6f97d8"></div>
<div class="a" style="left:331px;top:193px;width:1px;height:13px;background:#6f97d8"></div>
<div class="a" style="left:404px;top:193px;width:1px;height:13px;background:#6f97d8"></div>
<div class="a" style="left:474px;top:193px;width:1px;height:13px;background:#6f97d8"></div>
<div class="a" style="left:537px;top:193px;width:1px;height:13px;background:#6f97d8"></div>
<div class="a" style="left:590px;top:193px;width:1px;height:13px;background:#6f97d8"></div>
<svg class="a" style="left:251px;top:196px" width="11" height="9"><path d="M5 6 Q5 4.8 7.8 4.8 Q10.8 4.8 10.8 6.5 V8 H5 Z" fill="#48a858"/><path d="M0.5 6.8 Q0.5 5 3.2 5 Q6 5 6 6.8 V8.5 H0.5 Z" fill="#3562d4"/><circle cx="3.3" cy="2.8" r="2.5" fill="#e8a848"/><circle cx="3.4" cy="3.2" r="1.7" fill="#f8c878"/><circle cx="8" cy="2.9" r="2.6" fill="#6a3010"/><circle cx="8.2" cy="3.4" r="1.8" fill="#e08a48"/></svg>
<div class="t" style="left:263px;top:197px;color:#fff">Templates</div>
<div class="a" style="left:333px;top:195px;width:10px;height:10px;border-radius:5px;background:radial-gradient(circle at 50% 48%,#fff 0,#fff0d8 14%,#f8a050 32%,#e87820 60%,#c05810 100%)"></div>
<div class="t" style="left:345px;top:197px;color:#fff">Normal</div>
<svg class="a" style="left:408px;top:195px" width="8" height="10"><path d="M0 0 H5 L7.5 2.5 V9.5 H0 Z" fill="url(#dg)"/></svg>
<div class="t" style="left:418px;top:197px;color:#fff">Created</div>
<div class="t" style="left:430.5px;width:150px;text-align:center;top:197px;color:#fff">0 %</div>
<div class="a" style="left:604px;top:197px;width:7px;height:7px;background:linear-gradient(135deg,#fff,#f0ece0);box-shadow:0 0 0 0.5px #c8d4ec"></div>
<div class="a" style="left:10px;top:206px;width:615px;height:1px;background:#6f97d8"></div>
<div class="t" style="left:12px;top:210px;color:#fff">9. Tracking the project</div>
<div class="a" style="left:248px;top:206px;width:1px;height:13px;background:#6f97d8"></div>
<div class="a" style="left:331px;top:206px;width:1px;height:13px;background:#6f97d8"></div>
<div class="a" style="left:404px;top:206px;width:1px;height:13px;background:#6f97d8"></div>
<div class="a" style="left:474px;top:206px;width:1px;height:13px;background:#6f97d8"></div>
<div class="a" style="left:537px;top:206px;width:1px;height:13px;background:#6f97d8"></div>
<div class="a" style="left:590px;top:206px;width:1px;height:13px;background:#6f97d8"></div>
<svg class="a" style="left:251px;top:209px" width="11" height="9"><path d="M5 6 Q5 4.8 7.8 4.8 Q10.8 4.8 10.8 6.5 V8 H5 Z" fill="#48a858"/><path d="M0.5 6.8 Q0.5 5 3.2 5 Q6 5 6 6.8 V8.5 H0.5 Z" fill="#3562d4"/><circle cx="3.3" cy="2.8" r="2.5" fill="#e8a848"/><circle cx="3.4" cy="3.2" r="1.7" fill="#f8c878"/><circle cx="8" cy="2.9" r="2.6" fill="#6a3010"/><circle cx="8.2" cy="3.4" r="1.8" fill="#e08a48"/></svg>
<div class="t" style="left:263px;top:210px;color:#fff">Templates</div>
<div class="a" style="left:333px;top:208px;width:10px;height:10px;border-radius:5px;background:radial-gradient(circle at 50% 48%,#fff 0,#fff0d8 14%,#f8a050 32%,#e87820 60%,#c05810 100%)"></div>
<div class="t" style="left:345px;top:210px;color:#fff">Normal</div>
<svg class="a" style="left:408px;top:208px" width="8" height="10"><path d="M0 0 H5 L7.5 2.5 V9.5 H0 Z" fill="url(#dg)"/></svg>
<div class="t" style="left:418px;top:210px;color:#fff">Created</div>
<div class="t" style="left:430.5px;width:150px;text-align:center;top:210px;color:#fff">0 %</div>
<div class="a" style="left:604px;top:210px;width:7px;height:7px;background:linear-gradient(135deg,#fff,#f0ece0);box-shadow:0 0 0 0.5px #c8d4ec"></div>
<div class="a" style="left:10px;top:219px;width:615px;height:1px;background:#6f97d8"></div>
<div class="t" style="left:12px;top:223px;color:#fff">10. Inspecting completed work in the site</div>
<div class="a" style="left:248px;top:219px;width:1px;height:13px;background:#6f97d8"></div>
<div class="a" style="left:331px;top:219px;width:1px;height:13px;background:#6f97d8"></div>
<div class="a" style="left:404px;top:219px;width:1px;height:13px;background:#6f97d8"></div>
<div class="a" style="left:474px;top:219px;width:1px;height:13px;background:#6f97d8"></div>
<div class="a" style="left:537px;top:219px;width:1px;height:13px;background:#6f97d8"></div>
<div class="a" style="left:590px;top:219px;width:1px;height:13px;background:#6f97d8"></div>
<svg class="a" style="left:251px;top:222px" width="11" height="9"><path d="M5 6 Q5 4.8 7.8 4.8 Q10.8 4.8 10.8 6.5 V8 H5 Z" fill="#48a858"/><path d="M0.5 6.8 Q0.5 5 3.2 5 Q6 5 6 6.8 V8.5 H0.5 Z" fill="#3562d4"/><circle cx="3.3" cy="2.8" r="2.5" fill="#e8a848"/><circle cx="3.4" cy="3.2" r="1.7" fill="#f8c878"/><circle cx="8" cy="2.9" r="2.6" fill="#6a3010"/><circle cx="8.2" cy="3.4" r="1.8" fill="#e08a48"/></svg>
<div class="t" style="left:263px;top:223px;color:#fff">Templates</div>
<div class="a" style="left:333px;top:221px;width:10px;height:10px;border-radius:5px;background:radial-gradient(circle at 50% 48%,#fff 0,#fff0d8 14%,#f8a050 32%,#e87820 60%,#c05810 100%)"></div>
<div class="t" style="left:345px;top:223px;color:#fff">Normal</div>
<svg class="a" style="left:408px;top:221px" width="8" height="10"><path d="M0 0 H5 L7.5 2.5 V9.5 H0 Z" fill="url(#dg)"/></svg>
<div class="t" style="left:418px;top:223px;color:#fff">Created</div>
<div class="t" style="left:430.5px;width:150px;text-align:center;top:223px;color:#fff">0 %</div>
<div class="a" style="left:604px;top:223px;width:7px;height:7px;background:linear-gradient(135deg,#fff,#f0ece0);box-shadow:0 0 0 0.5px #c8d4ec"></div>
<div class="a" style="left:10px;top:232px;width:615px;height:1px;background:#6f97d8"></div>
<div class="t" style="left:12px;top:236px;color:#fff">11. Getting reports</div>
<div class="a" style="left:248px;top:232px;width:1px;height:13px;background:#6f97d8"></div>
<div class="a" style="left:331px;top:232px;width:1px;height:13px;background:#6f97d8"></div>
<div class="a" style="left:404px;top:232px;width:1px;height:13px;background:#6f97d8"></div>
<div class="a" style="left:474px;top:232px;width:1px;height:13px;background:#6f97d8"></div>
<div class="a" style="left:537px;top:232px;width:1px;height:13px;background:#6f97d8"></div>
<div class="a" style="left:590px;top:232px;width:1px;height:13px;background:#6f97d8"></div>
<svg class="a" style="left:251px;top:235px" width="11" height="9"><path d="M5 6 Q5 4.8 7.8 4.8 Q10.8 4.8 10.8 6.5 V8 H5 Z" fill="#48a858"/><path d="M0.5 6.8 Q0.5 5 3.2 5 Q6 5 6 6.8 V8.5 H0.5 Z" fill="#3562d4"/><circle cx="3.3" cy="2.8" r="2.5" fill="#e8a848"/><circle cx="3.4" cy="3.2" r="1.7" fill="#f8c878"/><circle cx="8" cy="2.9" r="2.6" fill="#6a3010"/><circle cx="8.2" cy="3.4" r="1.8" fill="#e08a48"/></svg>
<div class="t" style="left:263px;top:236px;color:#fff">Templates</div>
<div class="a" style="left:333px;top:234px;width:10px;height:10px;border-radius:5px;background:radial-gradient(circle at 50% 48%,#fff 0,#fff0d8 14%,#f8a050 32%,#e87820 60%,#c05810 100%)"></div>
<div class="t" style="left:345px;top:236px;color:#fff">Normal</div>
<svg class="a" style="left:408px;top:234px" width="8" height="10"><path d="M0 0 H5 L7.5 2.5 V9.5 H0 Z" fill="url(#dg)"/></svg>
<div class="t" style="left:418px;top:236px;color:#fff">Created</div>
<div class="t" style="left:430.5px;width:150px;text-align:center;top:236px;color:#fff">0 %</div>
<div class="a" style="left:604px;top:236px;width:7px;height:7px;background:linear-gradient(135deg,#fff,#f0ece0);box-shadow:0 0 0 0.5px #c8d4ec"></div>
<div class="a" style="left:10px;top:245px;width:615px;height:1px;background:#fff"></div>
<div class="a" style="left:10px;top:142px;width:615px;height:1px;background:repeating-linear-gradient(90deg,#8a96b0 0,#8a96b0 1px,#6f8cc8 1px,#6f8cc8 2px)"></div>
<div class="a" style="left:10px;top:155px;width:615px;height:1px;background:repeating-linear-gradient(90deg,#8a96b0 0,#8a96b0 1px,#6f8cc8 1px,#6f8cc8 2px)"></div>
<svg width="0" height="0" style="position:absolute"><defs><linearGradient id="dg" x1="0" y1="0" x2="1" y2="1"><stop offset="0" stop-color="#ffffff"/><stop offset="1" stop-color="#a8c8f0"/></linearGradient></defs></svg>
<div class="a" style="left:2px;top:443px;width:623px;height:15px;background:#ece9d8;border-top:1px solid #d6d3c6;border-bottom:1px solid #c4c4bc"></div>
<div class="a" style="left:2px;top:444px;width:246px;height:13px;background:#f2f1eb;border-left:1px solid #e4e2d8;border-right:1px solid #fbfbf8;border-bottom:1px solid #fff"></div>
<div class="t" style="left:5px;top:448px;">Count: 11</div>
<div class="a" style="left:2px;top:458px;width:623px;height:2px;background:#d6dadf"></div>
<div class="a" style="left:2px;top:460px;width:623px;height:13px;background:linear-gradient(#f7f6f2,#f1f0ea);border:1px solid #e6e4da;border-radius:2px 2px 0 0"></div>
<div class="t" style="left:4px;top:463px;">Note</div>
<svg class="a" style="left:604px;top:462px" width="8" height="9"><path d="M0.5 1 H7.5 M2 1 V4.5 H6 V1 M0.5 4.8 H7.5 M4 4.8 V8.5" stroke="#2a58b8" stroke-width="1.1" fill="none"/></svg>
<div class="a" style="left:614px;top:463px;width:8px;height:7px;background:linear-gradient(#f2987a,#d4502a);border:1px solid #c04a20;border-radius:1px"></div>
<svg class="a" style="left:615px;top:464px" width="6" height="5"><path d="M1 0.8 L5 4.2 M5 0.8 L1 4.2" stroke="#fff" stroke-width="1.2"/></svg>
<div class="a" style="left:2px;top:473px;width:623px;height:97px;background:#fff;border:1px solid #a9b8ce"></div>
<div class="a" style="left:1px;top:570px;width:625px;height:18px;background:#f4f3ee;border-left:1px solid #c3cbd6;border-right:1px solid #c3cbd6"></div>
<div class="a" style="left:2px;top:572px;width:623px;height:1px;background:#d4d2c8"></div>
<div class="a" style="left:1px;top:587px;width:625px;height:1px;background:#d0cdbd"></div>
<div class="a" style="left:4px;top:572px;width:20px;height:13px;background:#fff;border-left:1px solid #c0bdb0;border-right:1px solid #c0bdb0;border-bottom:2px solid #f0b040"></div>
<div class="t" style="left:7px;top:576px;">Note</div>
<div class="a" style="left:24px;top:572px;width:44px;height:13px;background:#f6f8f9;border:1px solid #c4ccd6;border-top:none"></div>
<div class="t" style="left:26px;top:576px;">Search result</div>
<div class="a" style="left:0px;top:588px;width:800px;height:12px;background:linear-gradient(#c4c1b2 0,#c4c1b2 1px,#e4e1d0 1px,#ebe8d7 5px,#ece9d8)"></div>
<div class="a" style="left:626px;top:45px;width:174px;height:543px;background:#ece9d8"></div>
<div class="a" style="left:625px;top:45px;width:2px;height:543px;background:#cdd4dc"></div>
<div class="a" style="left:798px;top:45px;width:2px;height:543px;background:#cdd4dc"></div>
<div class="a" style="left:627px;top:46px;width:171px;height:14px;background:linear-gradient(#fcfcfa,#f0efe7);border:1px solid #e6e4d6;border-radius:2px 2px 0 0"></div>
<div class="t" style="left:630px;top:49px;">Categories Bar</div>
<div class="a" style="left:768px;top:49px;width:8px;height:8px;background:linear-gradient(#70a8ff,#2060d8);border:1px solid #2a58c0;border-radius:1.5px"></div>
<div class="a" style="left:770px;top:51px;width:4px;height:4px;border:1px solid #fff;border-radius:0.5px"></div>
<svg class="a" style="left:779px;top:48px" width="7" height="10"><path d="M0.3 1 H6.7 M1.8 1 V5 H5.2 V1 M0.3 5.5 H6.7 M3.5 5.5 V9.5" stroke="#2a58b8" stroke-width="1.1" fill="none"/></svg>
<div class="a" style="left:788px;top:49px;width:8px;height:8px;background:linear-gradient(#f4a080,#d8542a);border:1px solid #c04a20;border-radius:1px"></div>
<svg class="a" style="left:789px;top:50px" width="6" height="6"><path d="M1 1 L5 5 M5 1 L1 5" stroke="#fff" stroke-width="1.3"/></svg>
<div class="a" style="left:627px;top:60px;width:171px;height:184px;background:#fff;border-top:1px solid #a9b5c2;border-bottom:1px solid #b4bcc6"></div>
<div class="a" style="left:627px;top:61px;width:171px;height:11px;background:#ebeadb;border-bottom:1px solid #d8d5c5"></div>
<div class="a" style="left:773px;top:63px;width:1px;height:8px;background:#cbc8b8"></div>
<div class="a" style="left:785px;top:63px;width:1px;height:8px;background:#cbc8b8"></div>
<div class="t" style="left:775px;top:63px;">J...</div>
<div class="t" style="left:787px;top:63px;">F...</div>
<div class="a" style="left:646px;top:82px;width:1px;height:69px;border-left:1px solid #d6d6d6"></div>
<div class="a" style="left:646px;top:150px;width:6px;height:1px;border-top:1px solid #d6d6d6"></div>
<div class="a" style="left:657px;top:124px;width:1px;height:17px;border-left:1px solid #d6d6d6"></div>
<div class="a" style="left:657px;top:130px;width:7px;height:1px;border-top:1px solid #d6d6d6"></div>
<div class="a" style="left:657px;top:140px;width:7px;height:1px;border-top:1px solid #d6d6d6"></div>
<svg width="0" height="0" style="position:absolute"><defs><linearGradient id="fg" x1="0" y1="0" x2="0" y2="1"><stop offset="0" stop-color="#fff0a0"/><stop offset="0.5" stop-color="#f8d858"/><stop offset="1" stop-color="#e0a830"/></linearGradient></defs></svg>
<div class="a" style="left:631px;top:74px;width:6px;height:6px;border:1px solid #a4acba;border-radius:1px;background:linear-gradient(135deg,#fdfdfd,#dcdad0)"></div>
<div class="a" style="left:632.5px;top:76.5px;width:3px;height:1px;background:#505050"></div>
<svg class="a" style="left:640px;top:73px" width="11" height="9"><path d="M0.5 1.5 H4 L5 2.5 H9.5 V8.5 H0.5 Z" fill="url(#fg)" stroke="#c8a040" stroke-width="0.6"/><path d="M2 4 H10.8 L9.3 8.5 H0.5 Z" fill="#f8e090" stroke="#c8a040" stroke-width="0.5"/></svg>
<svg class="a" style="left:653px;top:73px" width="12" height="9"><path d="M0.8 2 Q2 7.5 5.5 8 Q9.5 7.5 11 2.5" fill="#eef4fc" stroke="#c08060" stroke-width="0.9"/><path d="M6.5 1 Q10 0.5 11 2.5" stroke="#e8b8a8" stroke-width="0.8" fill="none"/><path d="M3.5 3 L5 7 L7 2.5" stroke="#5a8ad8" stroke-width="1.1" fill="none"/></svg>
<div class="t" style="left:666px;top:74px;">My Tasks</div>
<div class="t" style="left:634px;width:150px;text-align:right;top:74px;">19</div>
<div class="t" style="left:647px;width:150px;text-align:right;top:74px;">19</div>
<div class="a" style="left:643px;top:85px;width:6px;height:6px;border:1px solid #a4acba;border-radius:1px;background:linear-gradient(135deg,#fdfdfd,#dcdad0)"></div>
<div class="a" style="left:644.5px;top:87.5px;width:3px;height:1px;background:#505050"></div>
<div class="a" style="left:645.5px;top:86.5px;width:1px;height:3px;background:#505050"></div>
<svg class="a" style="left:652px;top:84px" width="11" height="9"><path d="M0.5 1.5 H4 L5 2.5 H9.5 V8.5 H0.5 Z" fill="url(#fg)" stroke="#c8a040" stroke-width="0.6"/></svg>
<svg class="a" style="left:665px;top:84px" width="11" height="9"><path d="M5 6 Q5 4.8 7.8 4.8 Q10.8 4.8 10.8 6.5 V8 H5 Z" fill="#48a858"/><path d="M0.5 6.8 Q0.5 5 3.2 5 Q6 5 6 6.8 V8.5 H0.5 Z" fill="#3562d4"/><circle cx="3.3" cy="2.8" r="2.5" fill="#e8a848"/><circle cx="3.4" cy="3.2" r="1.7" fill="#f8c878"/><circle cx="8" cy="2.9" r="2.6" fill="#6a3010"/><circle cx="8.2" cy="3.4" r="1.8" fill="#e08a48"/></svg>
<div class="t" style="left:678px;top:85px;">FLOORS</div>
<div class="t" style="left:634px;width:150px;text-align:right;top:85px;">4</div>
<div class="t" style="left:647px;width:150px;text-align:right;top:85px;">4</div>
<div class="a" style="left:643px;top:95px;width:6px;height:6px;border:1px solid #a4acba;border-radius:1px;background:linear-gradient(135deg,#fdfdfd,#dcdad0)"></div>
<div class="a" style="left:644.5px;top:97.5px;width:3px;height:1px;background:#505050"></div>
<div class="a" style="left:645.5px;top:96.5px;width:1px;height:3px;background:#505050"></div>
<svg class="a" style="left:652px;top:94px" width="11" height="9"><path d="M0.5 1.5 H4 L5 2.5 H9.5 V8.5 H0.5 Z" fill="url(#fg)" stroke="#c8a040" stroke-width="0.6"/></svg>
<svg class="a" style="left:665px;top:94px" width="11" height="9"><path d="M5 6 Q5 4.8 7.8 4.8 Q10.8 4.8 10.8 6.5 V8 H5 Z" fill="#48a858"/><path d="M0.5 6.8 Q0.5 5 3.2 5 Q6 5 6 6.8 V8.5 H0.5 Z" fill="#3562d4"/><circle cx="3.3" cy="2.8" r="2.5" fill="#e8a848"/><circle cx="3.4" cy="3.2" r="1.7" fill="#f8c878"/><circle cx="8" cy="2.9" r="2.6" fill="#6a3010"/><circle cx="8.2" cy="3.4" r="1.8" fill="#e08a48"/></svg>
<div class="t" style="left:678px;top:95px;">All Floors</div>
<div class="t" style="left:634px;width:150px;text-align:right;top:95px;">2</div>
<div class="t" style="left:647px;width:150px;text-align:right;top:95px;">2</div>
<div class="a" style="left:643px;top:106px;width:6px;height:6px;border:1px solid #a4acba;border-radius:1px;background:linear-gradient(135deg,#fdfdfd,#dcdad0)"></div>
<div class="a" style="left:644.5px;top:108.5px;width:3px;height:1px;background:#505050"></div>
<div class="a" style="left:645.5px;top:107.5px;width:1px;height:3px;background:#505050"></div>
<svg class="a" style="left:652px;top:105px" width="11" height="9"><path d="M0.5 1.5 H4 L5 2.5 H9.5 V8.5 H0.5 Z" fill="url(#fg)" stroke="#c8a040" stroke-width="0.6"/></svg>
<svg class="a" style="left:665px;top:105px" width="11" height="9"><path d="M5 6 Q5 4.8 7.8 4.8 Q10.8 4.8 10.8 6.5 V8 H5 Z" fill="#48a858"/><path d="M0.5 6.8 Q0.5 5 3.2 5 Q6 5 6 6.8 V8.5 H0.5 Z" fill="#3562d4"/><circle cx="3.3" cy="2.8" r="2.5" fill="#e8a848"/><circle cx="3.4" cy="3.2" r="1.7" fill="#f8c878"/><circle cx="8" cy="2.9" r="2.6" fill="#6a3010"/><circle cx="8.2" cy="3.4" r="1.8" fill="#e08a48"/></svg>
<div class="t" style="left:678px;top:106px;">Surrounding</div>
<div class="t" style="left:634px;width:150px;text-align:right;top:106px;">2</div>
<div class="t" style="left:647px;width:150px;text-align:right;top:106px;">2</div>
<div class="a" style="left:643px;top:117px;width:6px;height:6px;border:1px solid #a4acba;border-radius:1px;background:linear-gradient(135deg,#fdfdfd,#dcdad0)"></div>
<div class="a" style="left:644.5px;top:119.5px;width:3px;height:1px;background:#505050"></div>
<svg class="a" style="left:652px;top:116px" width="11" height="9"><path d="M0.5 1.5 H4 L5 2.5 H9.5 V8.5 H0.5 Z" fill="url(#fg)" stroke="#c8a040" stroke-width="0.6"/><path d="M2 4 H10.8 L9.3 8.5 H0.5 Z" fill="#f8e090" stroke="#c8a040" stroke-width="0.5"/></svg>
<svg class="a" style="left:665px;top:116px" width="11" height="9"><path d="M5 6 Q5 4.8 7.8 4.8 Q10.8 4.8 10.8 6.5 V8 H5 Z" fill="#48a858"/><path d="M0.5 6.8 Q0.5 5 3.2 5 Q6 5 6 6.8 V8.5 H0.5 Z" fill="#3562d4"/><circle cx="3.3" cy="2.8" r="2.5" fill="#e8a848"/><circle cx="3.4" cy="3.2" r="1.7" fill="#f8c878"/><circle cx="8" cy="2.9" r="2.6" fill="#6a3010"/><circle cx="8.2" cy="3.4" r="1.8" fill="#e08a48"/></svg>
<div class="t" style="left:678px;top:116px;">Cleaning Projects</div>
<svg class="a" style="left:665px;top:126px" width="11" height="9"><path d="M5 6 Q5 4.8 7.8 4.8 Q10.8 4.8 10.8 6.5 V8 H5 Z" fill="#48a858"/><path d="M0.5 6.8 Q0.5 5 3.2 5 Q6 5 6 6.8 V8.5 H0.5 Z" fill="#3562d4"/><circle cx="3.3" cy="2.8" r="2.5" fill="#e8a848"/><circle cx="3.4" cy="3.2" r="1.7" fill="#f8c878"/><circle cx="8" cy="2.9" r="2.6" fill="#6a3010"/><circle cx="8.2" cy="3.4" r="1.8" fill="#e08a48"/></svg>
<div class="t" style="left:678px;top:127px;">School #18</div>
<svg class="a" style="left:665px;top:136px" width="11" height="9"><path d="M5 6 Q5 4.8 7.8 4.8 Q10.8 4.8 10.8 6.5 V8 H5 Z" fill="#48a858"/><path d="M0.5 6.8 Q0.5 5 3.2 5 Q6 5 6 6.8 V8.5 H0.5 Z" fill="#3562d4"/><circle cx="3.3" cy="2.8" r="2.5" fill="#e8a848"/><circle cx="3.4" cy="3.2" r="1.7" fill="#f8c878"/><circle cx="8" cy="2.9" r="2.6" fill="#6a3010"/><circle cx="8.2" cy="3.4" r="1.8" fill="#e08a48"/></svg>
<div class="t" style="left:678px;top:137px;">Hospital</div>
<div class="a" style="left:652px;top:146px;width:146px;height:11px;border:1px solid #4a4a4a;background:#fff"></div>
<div class="a" style="left:773px;top:147px;width:24px;height:9px;background:#ebeadb"></div>
<svg class="a" style="left:654px;top:147px" width="11" height="9"><path d="M5 6 Q5 4.8 7.8 4.8 Q10.8 4.8 10.8 6.5 V8 H5 Z" fill="#48a858"/><path d="M0.5 6.8 Q0.5 5 3.2 5 Q6 5 6 6.8 V8.5 H0.5 Z" fill="#3562d4"/><circle cx="3.3" cy="2.8" r="2.5" fill="#e8a848"/><circle cx="3.4" cy="3.2" r="1.7" fill="#f8c878"/><circle cx="8" cy="2.9" r="2.6" fill="#6a3010"/><circle cx="8.2" cy="3.4" r="1.8" fill="#e08a48"/></svg>
<div class="t" style="left:667px;top:148px;font-weight:bold;font-size:7px">Templates</div>
<div class="t" style="left:634px;width:150px;text-align:right;top:148px;font-weight:bold;font-size:7.3px">11</div>
<div class="t" style="left:646.5px;width:150px;text-align:right;top:148px;font-weight:bold;font-size:7.3px">11</div>
<div class="a" style="left:627px;top:246px;width:171px;height:14px;background:linear-gradient(#fcfcfa,#f0efe7);border:1px solid #e6e4d6;border-radius:2px 2px 0 0"></div>
<div class="t" style="left:630px;top:249px;">Filters Bar</div>
<div class="a" style="left:768px;top:249px;width:8px;height:8px;background:linear-gradient(#70a8ff,#2060d8);border:1px solid #2a58c0;border-radius:1.5px"></div>
<div class="a" style="left:770px;top:251px;width:4px;height:4px;border:1px solid #fff;border-radius:0.5px"></div>
<svg class="a" style="left:779px;top:248px" width="7" height="10"><path d="M0.3 1 H6.7 M1.8 1 V5 H5.2 V1 M0.3 5.5 H6.7 M3.5 5.5 V9.5" stroke="#2a58b8" stroke-width="1.1" fill="none"/></svg>
<div class="a" style="left:788px;top:249px;width:8px;height:8px;background:linear-gradient(#f4a080,#d8542a);border:1px solid #c04a20;border-radius:1px"></div>
<svg class="a" style="left:789px;top:250px" width="6" height="6"><path d="M1 1 L5 5 M5 1 L1 5" stroke="#fff" stroke-width="1.3"/></svg>
<div class="a" style="left:628px;top:260px;width:170px;height:125px;background:#ece9d8;border-left:1px solid #c9c6b6;border-bottom:1px solid #c9c6b6;border-right:1px solid #e8e6da"></div>
<div class="a" style="left:690px;top:260px;width:1px;height:124px;background:#c3c0b0"></div>
<div class="t" style="left:638px;top:263px;">Completion</div>
<div class="a" style="left:787px;top:262px;width:9px;height:9px;background:linear-gradient(#e3ebfc,#b9cbf3);border-radius:1px"></div>
<svg class="a" style="left:788.5px;top:264.75px" width="6" height="4.0"><path d="M0.6 0.7 L3.0 2.8 L5.4 0.7" fill="none" stroke="#3c4c7c" stroke-width="1.3"/></svg>
<div class="t" style="left:638px;top:276px;">Due Date</div>
<div class="a" style="left:629px;top:273px;width:169px;height:1px;border-top:1px dashed #dcd9ca"></div>
<div class="a" style="left:787px;top:275px;width:9px;height:9px;background:linear-gradient(#e3ebfc,#b9cbf3);border-radius:1px"></div>
<svg class="a" style="left:788.5px;top:277.75px" width="6" height="4.0"><path d="M0.6 0.7 L3.0 2.8 L5.4 0.7" fill="none" stroke="#3c4c7c" stroke-width="1.3"/></svg>
<div class="t" style="left:638px;top:288px;">Status</div>
<div class="a" style="left:629px;top:285px;width:169px;height:1px;border-top:1px dashed #dcd9ca"></div>
<div class="a" style="left:787px;top:287px;width:9px;height:9px;background:linear-gradient(#e3ebfc,#b9cbf3);border-radius:1px"></div>
<svg class="a" style="left:788.5px;top:289.75px" width="6" height="4.0"><path d="M0.6 0.7 L3.0 2.8 L5.4 0.7" fill="none" stroke="#3c4c7c" stroke-width="1.3"/></svg>
<div class="t" style="left:638px;top:300px;">Priority</div>
<div class="a" style="left:629px;top:297px;width:169px;height:1px;border-top:1px dashed #dcd9ca"></div>
<div class="a" style="left:787px;top:299px;width:9px;height:9px;background:linear-gradient(#e3ebfc,#b9cbf3);border-radius:1px"></div>
<svg class="a" style="left:788.5px;top:301.75px" width="6" height="4.0"><path d="M0.6 0.7 L3.0 2.8 L5.4 0.7" fill="none" stroke="#3c4c7c" stroke-width="1.3"/></svg>
<div class="t" style="left:638px;top:313px;">Assignments</div>
<div class="a" style="left:629px;top:310px;width:169px;height:1px;border-top:1px dashed #dcd9ca"></div>
<div class="a" style="left:787px;top:312px;width:9px;height:9px;background:linear-gradient(#e3ebfc,#b9cbf3);border-radius:1px"></div>
<svg class="a" style="left:788.5px;top:314.75px" width="6" height="4.0"><path d="M0.6 0.7 L3.0 2.8 L5.4 0.7" fill="none" stroke="#3c4c7c" stroke-width="1.3"/></svg>
<div class="t" style="left:638px;top:325px;">Task Name</div>
<div class="a" style="left:629px;top:322px;width:169px;height:1px;border-top:1px dashed #dcd9ca"></div>
<div class="t" style="left:638px;top:337px;">Date Created</div>
<div class="a" style="left:629px;top:334px;width:169px;height:1px;border-top:1px dashed #dcd9ca"></div>
<div class="a" style="left:787px;top:336px;width:9px;height:9px;background:linear-gradient(#e3ebfc,#b9cbf3);border-radius:1px"></div>
<svg class="a" style="left:788.5px;top:338.75px" width="6" height="4.0"><path d="M0.6 0.7 L3.0 2.8 L5.4 0.7" fill="none" stroke="#3c4c7c" stroke-width="1.3"/></svg>
<div class="t" style="left:638px;top:349px;width:50px;overflow:hidden">Date Last Modifi</div>
<div class="a" style="left:629px;top:346px;width:169px;height:1px;border-top:1px dashed #dcd9ca"></div>
<div class="a" style="left:787px;top:348px;width:9px;height:9px;background:linear-gradient(#e3ebfc,#b9cbf3);border-radius:1px"></div>
<svg class="a" style="left:788.5px;top:350.75px" width="6" height="4.0"><path d="M0.6 0.7 L3.0 2.8 L5.4 0.7" fill="none" stroke="#3c4c7c" stroke-width="1.3"/></svg>
<div class="t" style="left:638px;top:362px;">Date Opened</div>
<div class="a" style="left:629px;top:359px;width:169px;height:1px;border-top:1px dashed #dcd9ca"></div>
<div class="a" style="left:787px;top:361px;width:9px;height:9px;background:linear-gradient(#e3ebfc,#b9cbf3);border-radius:1px"></div>
<svg class="a" style="left:788.5px;top:363.75px" width="6" height="4.0"><path d="M0.6 0.7 L3.0 2.8 L5.4 0.7" fill="none" stroke="#3c4c7c" stroke-width="1.3"/></svg>
<div class="t" style="left:638px;top:374px;">Date Completed</div>
<div class="a" style="left:629px;top:371px;width:169px;height:1px;border-top:1px dashed #dcd9ca"></div>
<div class="a" style="left:787px;top:373px;width:9px;height:9px;background:linear-gradient(#e3ebfc,#b9cbf3);border-radius:1px"></div>
<svg class="a" style="left:788.5px;top:375.75px" width="6" height="4.0"><path d="M0.6 0.7 L3.0 2.8 L5.4 0.7" fill="none" stroke="#3c4c7c" stroke-width="1.3"/></svg>
<div class="a" style="left:627px;top:426px;width:171px;height:14px;background:linear-gradient(#fcfcfa,#f0efe7);border:1px solid #e6e4d6;border-radius:2px 2px 0 0"></div>
<div class="t" style="left:630px;top:429px;">Resource Assignment Bar</div>
<div class="a" style="left:768px;top:429px;width:8px;height:8px;background:linear-gradient(#70a8ff,#2060d8);border:1px solid #2a58c0;border-radius:1.5px"></div>
<div class="a" style="left:770px;top:431px;width:4px;height:4px;border:1px solid #fff;border-radius:0.5px"></div>
<svg class="a" style="left:779px;top:428px" width="7" height="10"><path d="M0.3 1 H6.7 M1.8 1 V5 H5.2 V1 M0.3 5.5 H6.7 M3.5 5.5 V9.5" stroke="#2a58b8" stroke-width="1.1" fill="none"/></svg>
<div class="a" style="left:788px;top:429px;width:8px;height:8px;background:linear-gradient(#f4a080,#d8542a);border:1px solid #c04a20;border-radius:1px"></div>
<svg class="a" style="left:789px;top:430px" width="6" height="6"><path d="M1 1 L5 5 M5 1 L1 5" stroke="#fff" stroke-width="1.3"/></svg>
<div class="a" style="left:627px;top:440px;width:171px;height:148px;background:#fff;border-top:1px solid #a9b5c2;border-bottom:1px solid #b4bcc6"></div>
<div class="t" style="left:637.5px;width:150px;text-align:center;top:510px;color:#a8a8a8">&lt;No data to display&gt;</div>
<div class="a" style="left:511px;top:249px;width:112px;height:176px;background:#ece9d8;border:2px solid #7484d4;border-top:none"></div>
<div class="a" style="left:511px;top:249px;width:112px;height:13px;background:linear-gradient(90deg,rgba(0,0,0,0) 85%,rgba(90,80,200,0.25)),linear-gradient(#6c84d6,#7a98e4 70%,#7290dc)"></div>
<div class="t" style="left:513px;top:253px;color:#dfe6ff;font-weight:bold;font-size:7.2px">Customization</div>
<div class="a" style="left:611px;top:253px;width:9px;height:8px;background:linear-gradient(#c88aa0,#a86480);border:1px solid #c0b8e8;border-radius:1px"></div>
<svg class="a" style="left:612px;top:254px" width="7" height="6"><path d="M1.5 1 L5.5 5 M5.5 1 L1.5 5" stroke="#fff" stroke-width="1.4"/></svg>
<div class="a" style="left:514px;top:263px;width:35px;height:13px;background:linear-gradient(#eeb058 0,#f4c470 1px,#fbe4b0 2px,#fdfdfb 3px);border-left:1px solid #c4c1b1;border-right:1px solid #b0ad9d;border-radius:2px 2px 0 0"></div>
<div class="t" style="left:519px;top:266px;">Columns</div>
<div class="a" style="left:515px;top:276px;width:102px;height:143px;background:#f7f6f1;border:1px solid #b5b2a2"></div>
<div class="a" style="left:516px;top:277px;width:90px;height:11px;background:#ebe9db;border-right:1px solid #cbc8b8;border-bottom:1px solid #cbc8b8;border-left:1px solid #fff;border-top:1px solid #fbfbf8"></div>
<div class="t" style="left:518px;top:279px;">Actual Time</div>
<div class="a" style="left:516px;top:288px;width:90px;height:11px;background:#ebe9db;border-right:1px solid #cbc8b8;border-bottom:1px solid #cbc8b8;border-left:1px solid #fff;border-top:1px solid #fbfbf8"></div>
<div class="t" style="left:518px;top:290px;">Date Completed</div>
<div class="a" style="left:516px;top:299px;width:90px;height:11px;background:#ebe9db;border-right:1px solid #cbc8b8;border-bottom:1px solid #cbc8b8;border-left:1px solid #fff;border-top:1px solid #fbfbf8"></div>
<div class="t" style="left:518px;top:301px;">Date Created</div>
<div class="a" style="left:516px;top:310px;width:90px;height:11px;background:#ebe9db;border-right:1px solid #cbc8b8;border-bottom:1px solid #cbc8b8;border-left:1px solid #fff;border-top:1px solid #fbfbf8"></div>
<div class="t" style="left:518px;top:312px;">Date Last Modified</div>
<div class="a" style="left:516px;top:321px;width:90px;height:11px;background:#ebe9db;border-right:1px solid #cbc8b8;border-bottom:1px solid #cbc8b8;border-left:1px solid #fff;border-top:1px solid #fbfbf8"></div>
<div class="t" style="left:518px;top:323px;">Date Opened</div>
<div class="a" style="left:516px;top:332px;width:90px;height:11px;background:#ebe9db;border-right:1px solid #cbc8b8;border-bottom:1px solid #cbc8b8;border-left:1px solid #fff;border-top:1px solid #fbfbf8"></div>
<div class="t" style="left:518px;top:335px;">Days Left</div>
<div class="a" style="left:516px;top:344px;width:90px;height:11px;background:#ebe9db;border-right:1px solid #cbc8b8;border-bottom:1px solid #cbc8b8;border-left:1px solid #fff;border-top:1px solid #fbfbf8"></div>
<div class="t" style="left:518px;top:346px;">Department</div>
<div class="a" style="left:516px;top:355px;width:90px;height:11px;background:#ebe9db;border-right:1px solid #cbc8b8;border-bottom:1px solid #cbc8b8;border-left:1px solid #fff;border-top:1px solid #fbfbf8"></div>
<div class="t" style="left:518px;top:357px;">Due Date</div>
<div class="a" style="left:516px;top:366px;width:90px;height:11px;background:#ebe9db;border-right:1px solid #cbc8b8;border-bottom:1px solid #cbc8b8;border-left:1px solid #fff;border-top:1px solid #fbfbf8"></div>
<div class="t" style="left:518px;top:368px;">Due Date&amp;Time</div>
<div class="a" style="left:516px;top:377px;width:90px;height:11px;background:#ebe9db;border-right:1px solid #cbc8b8;border-bottom:1px solid #cbc8b8;border-left:1px solid #fff;border-top:1px solid #fbfbf8"></div>
<div class="t" style="left:518px;top:379px;">Estimated Time</div>
<div class="a" style="left:516px;top:388px;width:90px;height:11px;background:#ebe9db;border-right:1px solid #cbc8b8;border-bottom:1px solid #cbc8b8;border-left:1px solid #fff;border-top:1px solid #fbfbf8"></div>
<div class="t" style="left:518px;top:390px;">Info</div>
<div class="a" style="left:516px;top:399px;width:90px;height:11px;background:#ebe9db;border-right:1px solid #cbc8b8;border-bottom:1px solid #cbc8b8;border-left:1px solid #fff;border-top:1px solid #fbfbf8"></div>
<div class="t" style="left:518px;top:401px;">Reminder Time</div>
<div class="a" style="left:516px;top:410px;width:90px;height:8px;background:#ebe9db;border-right:1px solid #cbc8b8;border-bottom:1px solid #cbc8b8;border-left:1px solid #fff;border-top:1px solid #fbfbf8"></div>
<div class="t" style="left:518px;top:412px;">Resources</div>
<div class="a" style="left:606px;top:277px;width:10px;height:141px;background:#f4f3ee"></div>
<div class="a" style="left:606px;top:277px;width:10px;height:10px;background:linear-gradient(#dde7fc,#bccdf4);border-radius:1px"></div>
<svg class="a" style="left:608.5px;top:280px" width="5" height="4.5"><path d="M0.6 3.5 L2.5 0.7 L4.4 3.5" fill="none" stroke="#4d6185" stroke-width="1.2"/></svg>
<div class="a" style="left:606px;top:288px;width:10px;height:103px;background:linear-gradient(90deg,#cad9fb,#b2c7f4);border-radius:1px;border:1px solid #e8eefc"></div>
<div class="a" style="left:606px;top:407px;width:10px;height:11px;background:linear-gradient(#dde7fc,#bccdf4);border-radius:1px"></div>
<svg class="a" style="left:608.5px;top:411px" width="5" height="4.5"><path d="M0.6 0.7 L2.5 3.3 L4.4 0.7" fill="none" stroke="#4d6185" stroke-width="1.2"/></svg>
<div class="a" style="left:209px;top:147px;width:167px;height:277px;background:rgba(0,0,0,0.09);border-radius:2px;filter:blur(0.6px)"></div>
<div class="a" style="left:207px;top:145px;width:167px;height:277px;background:#fff;border:1px solid #bab9b2"></div>
<div class="a" style="left:209px;top:194px;width:163px;height:1px;background:#dedbd0"></div>
<div class="a" style="left:209px;top:223px;width:163px;height:1px;background:#dedbd0"></div>
<div class="a" style="left:209px;top:251px;width:163px;height:1px;background:#dedbd0"></div>
<div class="a" style="left:209px;top:279px;width:163px;height:1px;background:#dedbd0"></div>
<div class="a" style="left:209px;top:296px;width:163px;height:1px;background:#dedbd0"></div>
<div class="a" style="left:209px;top:312px;width:163px;height:1px;background:#dedbd0"></div>
<div class="a" style="left:209px;top:328px;width:163px;height:1px;background:#dedbd0"></div>
<div class="a" style="left:209px;top:367px;width:163px;height:1px;background:#dedbd0"></div>
<div class="a" style="left:209px;top:382px;width:163px;height:1px;background:#dedbd0"></div>
<div class="a" style="left:221px;top:198px;width:151px;height:11px;background:#316ac5"></div>
<div class="a" style="left:208px;top:197px;width:13px;height:12px;background:#f4f3ee;border:1px solid #c9d2e4;border-radius:1px"></div>
<div class="t" style="left:222px;top:148px;color:#000">Create Task</div>
<div class="t" style="left:207px;width:150px;text-align:right;top:148px;color:#000">Ins</div>
<div class="t" style="left:222px;top:160px;color:#000">Edit Task</div>
<div class="t" style="left:207px;width:150px;text-align:right;top:160px;color:#000">F4</div>
<div class="t" style="left:222px;top:172px;color:#000">Delete Task(s)</div>
<div class="t" style="left:222px;top:184px;color:#000">Duplicate Task</div>
<div class="t" style="left:207px;width:150px;text-align:right;top:184px;color:#000">Ctrl+D</div>
<div class="t" style="left:222px;top:200px;color:#fff">Copy Tasks</div>
<div class="t" style="left:207px;width:150px;text-align:right;top:200px;color:#fff">Ctrl+C</div>
<div class="t" style="left:222px;top:212px;color:#000">Paste Tasks</div>
<div class="t" style="left:207px;width:150px;text-align:right;top:212px;color:#000">Ctrl+V</div>
<div class="t" style="left:222px;top:228px;color:#000">Task Move Up</div>
<div class="t" style="left:207px;width:150px;text-align:right;top:228px;color:#000">Ctrl+Up</div>
<div class="t" style="left:222px;top:240px;color:#000">Task Move Down</div>
<div class="t" style="left:207px;width:150px;text-align:right;top:240px;color:#000">Ctrl+Down</div>
<div class="t" style="left:222px;top:256px;color:#000">Increase Priority</div>
<div class="t" style="left:207px;width:150px;text-align:right;top:256px;color:#000">Shift+Ctrl+Up</div>
<div class="t" style="left:222px;top:268px;color:#000">Decrease Priority</div>
<div class="t" style="left:207px;width:150px;text-align:right;top:268px;color:#000">Shift+Ctrl+Down</div>
<div class="t" style="left:222px;top:301px;color:#000">Send task to assigned resource</div>
<div class="t" style="left:207px;width:150px;text-align:right;top:301px;color:#000">Ctrl+I</div>
<div class="t" style="left:222px;top:317px;color:#aca899">Paste New Task(s)</div>
<div class="t" style="left:222px;top:333px;color:#000">Change Status</div>
<div class="t" style="left:222px;top:345px;color:#000">Change Category</div>
<div class="t" style="left:222px;top:372px;color:#000">Export</div>
<div class="t" style="left:222px;top:388px;color:#000">Always Expand</div>
<div class="t" style="left:222px;top:400px;color:#aca899">Expand All</div>
<div class="t" style="left:207px;width:150px;text-align:right;top:400px;color:#aca899">Ctrl+Alt+E</div>
<div class="t" style="left:222px;top:411px;color:#aca899">Collapse All</div>
<div class="t" style="left:207px;width:150px;text-align:right;top:411px;color:#aca899">Ctrl+Alt+C</div>
<div class="a" style="left:366px;top:334px;border-top:2.5px solid transparent;border-bottom:2.5px solid transparent;border-left:3px solid #000"></div>
<div class="a" style="left:366px;top:346px;border-top:2.5px solid transparent;border-bottom:2.5px solid transparent;border-left:3px solid #000"></div>
<div class="a" style="left:366px;top:373px;border-top:2.5px solid transparent;border-bottom:2.5px solid transparent;border-left:3px solid #000"></div>
<div class="t" style="left:211px;top:284px;color:#aca899">Filter Presets</div>
<div class="a" style="left:254px;top:282px;width:118px;height:11px;background:#f5f4ef;border:1px solid #cbcac4"></div>
<div class="t" style="left:256px;top:284px;color:#b8b7b0">Custom</div>
<div class="a" style="left:362px;top:283px;width:9px;height:10px;background:#f0efea"></div>
<svg class="a" style="left:364px;top:286px" width="5" height="4.5"><path d="M0.6 0.7 L2.5 3.3 L4.4 0.7" fill="none" stroke="#c4c3bc" stroke-width="1.2"/></svg>
<div class="t" style="left:211px;top:356px;">Set Due Date for selected tasks</div>
<div class="a" style="left:310px;top:354px;width:62px;height:11px;background:#fff;border:1px solid #98b0c8"></div>
<div class="t" style="left:312px;top:356px;">Tue 16/12/2008</div>
<div class="a" style="left:363px;top:355px;width:8px;height:9px;background:linear-gradient(#e3ebfc,#b9cbf3);border-radius:1px"></div>
<svg class="a" style="left:364.0px;top:357.75px" width="6" height="4.0"><path d="M0.6 0.7 L3.0 2.8 L5.4 0.7" fill="none" stroke="#3c4c7c" stroke-width="1.3"/></svg>
<div class="a" style="left:209px;top:386px;width:11px;height:11px;background:#fcfcfc;border:1px solid #c4d0e2;border-radius:2px"></div>
<svg class="a" style="left:212px;top:389px" width="6" height="5"><path d="M0.6 2.3 L2.2 4 L5.4 0.8" stroke="#202020" stroke-width="1.1" fill="none"/></svg>
<svg class="a" style="left:208px;top:146px" width="12" height="12"><rect x="2.5" y="2.5" width="7" height="8" fill="#eef2f8" stroke="#9aa8c0" stroke-width="0.6"/><path d="M1 1 H6 L7 3 H1 Z" fill="#f4dc78"/><circle cx="8" cy="8.5" r="2.5" fill="none" stroke="#e05a5a" stroke-width="0.9"/></svg>
<svg class="a" style="left:208px;top:158px" width="12" height="12"><rect x="1" y="2" width="8" height="9" fill="#eaf0fa" stroke="#8ea0c0" stroke-width="0.6"/><path d="M3 9.5 L9.5 2.5" stroke="#606880" stroke-width="1.8"/><circle cx="10" cy="2" r="1.4" fill="#e07050"/></svg>
<svg class="a" style="left:208px;top:170px" width="12" height="12"><path d="M3 6 H10 L9 11 H4 Z" fill="#a8d0f4" stroke="#70a0d0" stroke-width="0.6"/><path d="M4 4 Q6 1 9 3" stroke="#30a040" stroke-width="1.6" fill="none"/><circle cx="2.5" cy="3.5" r="1.3" fill="#8090b0"/></svg>
<svg class="a" style="left:209px;top:198px" width="11" height="11"><rect x="1" y="1" width="6" height="7" fill="#f0f4fb" stroke="#98a8c4" stroke-width="0.7"/><rect x="4" y="3" width="6" height="7" fill="#e8eefb" stroke="#98a8c4" stroke-width="0.7"/></svg>
<svg class="a" style="left:208px;top:209px" width="12" height="12"><rect x="1" y="1.5" width="9" height="9.5" rx="1" fill="#f4d898" stroke="#c8a050" stroke-width="0.7"/><rect x="4.5" y="4.5" width="6.5" height="7" fill="#f4f6fb" stroke="#98a8c4" stroke-width="0.7"/></svg>
<div class="a" style="left:209px;top:227px;width:10px;height:9px;border-radius:1.5px;background:linear-gradient(#78b4f8,#3a7ede 60%,#3270d0);border:1px solid #4a7cc8"></div>
<svg class="a" style="left:211px;top:229.5px" width="6" height="4.0"><path d="M0.6 3.0 L3.0 0.7 L5.4 3.0" fill="none" stroke="#fff" stroke-width="1.5"/></svg>
<div class="a" style="left:209px;top:239px;width:10px;height:9px;border-radius:1.5px;background:linear-gradient(#78b4f8,#3a7ede 60%,#3270d0);border:1px solid #4a7cc8"></div>
<svg class="a" style="left:211px;top:241.5px" width="6" height="4.0"><path d="M0.6 0.7 L3.0 2.8 L5.4 0.7" fill="none" stroke="#fff" stroke-width="1.5"/></svg>
<div class="a" style="left:209px;top:255px;width:10px;height:9px;border-radius:1.5px;background:linear-gradient(#78b4f8,#3a7ede 60%,#3270d0);border:1px solid #4a7cc8"></div>
<svg class="a" style="left:211px;top:256px" width="6" height="3.7"><path d="M0.6 2.7 L3.0 0.7 L5.4 2.7" fill="none" stroke="#e8f0ff" stroke-width="1.1"/></svg>
<svg class="a" style="left:211px;top:259px" width="6" height="3.7"><path d="M0.6 2.7 L3.0 0.7 L5.4 2.7" fill="none" stroke="#e8f0ff" stroke-width="1.1"/></svg>
<div class="a" style="left:209px;top:267px;width:10px;height:9px;border-radius:1.5px;background:linear-gradient(#78b4f8,#3a7ede 60%,#3270d0);border:1px solid #4a7cc8"></div>
<svg class="a" style="left:211px;top:268px" width="6" height="3.7"><path d="M0.6 0.7 L3.0 2.5 L5.4 0.7" fill="none" stroke="#e8f0ff" stroke-width="1.1"/></svg>
<svg class="a" style="left:211px;top:271px" width="6" height="3.7"><path d="M0.6 0.7 L3.0 2.5 L5.4 0.7" fill="none" stroke="#e8f0ff" stroke-width="1.1"/></svg>
<svg class="a" style="left:208px;top:298px" width="12" height="12"><path d="M1 5 Q5 0 10 4 V10 H1 Z" fill="#f8e8b8" stroke="#b8a878" stroke-width="0.6"/><path d="M5 8 H11 M9 6 L11 8 L9 10" stroke="#3a70d0" stroke-width="1.2" fill="none"/></svg>
<svg class="a" style="left:208px;top:315px" width="12" height="10"><path d="M4 1 H1 V4 H4 M4 6 H1 V9 H4 M5 5 H11" stroke="#b0b0b0" stroke-width="0.8" fill="none"/></svg>
</body></html>
